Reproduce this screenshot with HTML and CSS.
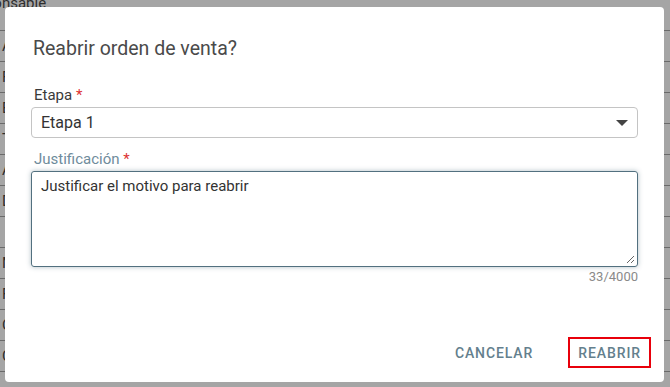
FILE: index.html
```html
<!DOCTYPE html>
<html lang="es">
<head>
  <meta charset="UTF-8">
  <meta name="viewport" content="width=device-width, initial-scale=1.0">
  <title>Reabrir orden de venta</title>
  <link rel="stylesheet" href="styles.css">
</head>
<body>
  <div class="page">
    <div class="row first">Responsable</div>
    <div class="row">A</div>
    <div class="row">Fe</div>
    <div class="row">Est</div>
    <div class="row">Ti</div>
    <div class="row">Ag</div>
    <div class="row">Des</div>
    <div class="row"></div>
    <div class="row">Ma</div>
    <div class="row">Fe</div>
    <div class="row">O</div>
    <div class="row">C</div>
  </div>

  <div class="backdrop"></div>

  <div class="dialog">
    <h2 class="title">Reabrir orden de venta?</h2>

    <div class="field">
      <label class="label">Etapa <span class="req">*</span></label>
      <div class="select">
        <span>Etapa 1</span>
        <svg class="caret" width="12" height="6" viewBox="0 0 12 6"><path d="M0 0h12L6 6z" fill="#444"/></svg>
      </div>
    </div>

    <div class="field focused">
      <label class="label">Justificación <span class="req">*</span></label>
      <div class="textarea">
        <span>Justificar el motivo para reabrir</span>
        <svg class="grip" width="9" height="9" viewBox="0 0 9 9"><path d="M8 1L1 8M8 5L5 8" stroke="#666" stroke-width="1"/></svg>
      </div>
      <div class="counter">33/4000</div>
    </div>

    <div class="actions">
      <button type="button" class="btn">CANCELAR</button>
      <button type="button" class="btn marked">REABRIR</button>
    </div>
  </div>
</body>
</html>
```

FILE: styles.css
```css
html, body {
  margin: 0;
  height: 100%;
}
body {
  font-family: Roboto, "Liberation Sans", sans-serif;
  background: #fff;
  overflow: hidden;
  position: relative;
}
.page {
  font-size: 15px;
  color: #333;
}
.row {
  height: 30px;
  border-bottom: 1px solid #999;
  line-height: 30px;
  padding-left: 2px;
  overflow: hidden;
  white-space: nowrap;
}
.row.first {
  height: 30px;
  line-height: 6px;
  margin-left: -42px;
}
.backdrop {
  position: absolute;
  inset: 0;
  background: rgba(40, 40, 40, 0.42);
}
.dialog {
  position: absolute;
  left: 5px;
  top: 7px;
  width: 659px;
  height: 375px;
  box-sizing: border-box;
  background: #fff;
  border-radius: 4px;
  padding: 30px 26px 0 26px;
  display: flex;
  flex-direction: column;
}
.title {
  margin: 0 0 0 2px;
  font-size: 19.5px;
  font-weight: 400;
  color: #4a4a4a;
  line-height: 24px;
}
.field {
  margin-top: 24px;
}
.field + .field {
  margin-top: 11px;
}
.label {
  display: block;
  margin-left: 3px;
  font-size: 15px;
  color: #3a3a3a;
  line-height: 20px;
  margin-bottom: 2px;
}
.focused .label {
  color: #6f8c9c;
}
.req {
  color: #d33;
}
.select {
  height: 31px;
  box-sizing: border-box;
  border: 1px solid #c4c4c4;
  border-radius: 4px;
  display: flex;
  align-items: center;
  justify-content: space-between;
  padding: 0 9px;
  font-size: 16px;
  color: #333;
}
.textarea {
  position: relative;
  height: 96px;
  box-sizing: border-box;
  border: 1px solid #52707f;
  border-radius: 3px;
  box-shadow: 0 0 5px rgba(82, 112, 127, 0.45);
  padding: 5px 9px;
  font-size: 15px;
  color: #333;
}
.grip {
  position: absolute;
  right: 2px;
  bottom: 2px;
}
.counter {
  text-align: right;
  font-size: 13px;
  color: #8a8a8a;
  margin-top: 2px;
}
.actions {
  margin-top: auto;
  margin-bottom: 14px;
  display: flex;
  justify-content: flex-end;
  gap: 25px;
  margin-right: -13px;
}
.btn {
  font-family: Roboto, "Liberation Sans", sans-serif;
  font-size: 14px;
  font-weight: 500;
  letter-spacing: 0.9px;
  color: #647f8d;
  background: none;
  border: 2px solid transparent;
  height: 31px;
  padding: 0 8px;
}
.btn.marked {
  border-color: #e8000b;
}
```
